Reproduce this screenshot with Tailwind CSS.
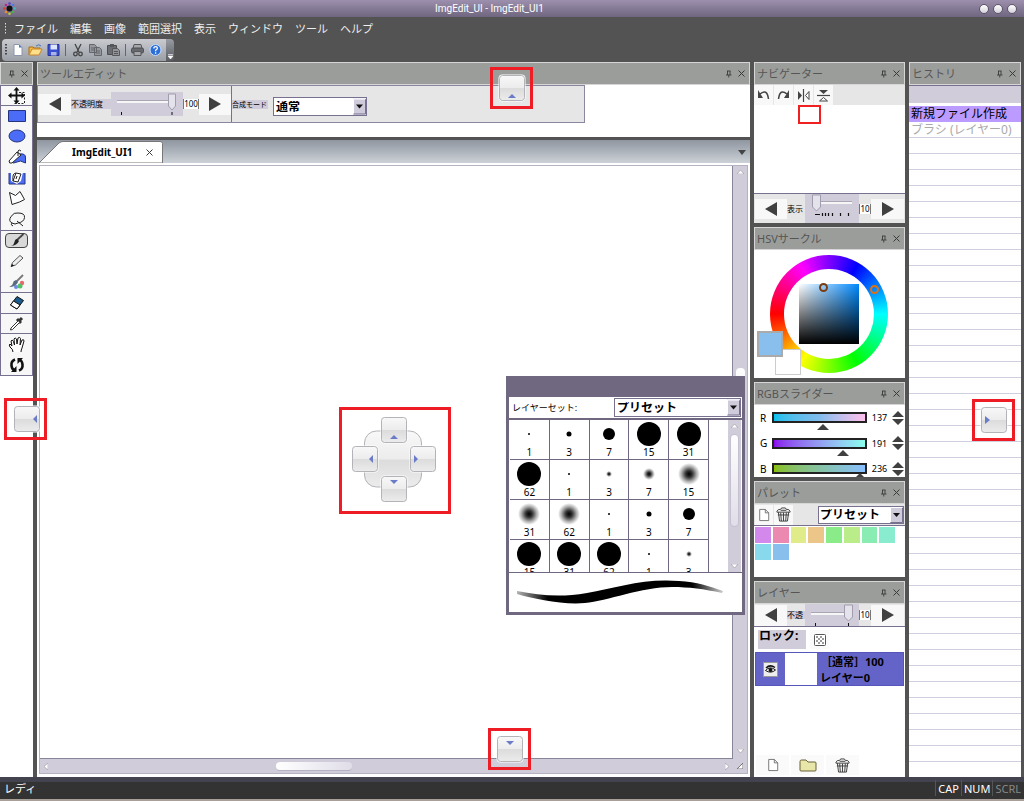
<!DOCTYPE html>
<html lang="ja">
<head>
<meta charset="utf-8">
<title>ImgEdit_UI - ImgEdit_UI1</title>
<script src="https://cdn.jsdelivr.net/npm/@tailwindcss/browser@4"></script>
</head>
<body class="relative flex h-screen flex-col overflow-hidden bg-[#535353] text-[11px] leading-none font-['Noto_Sans','Noto_Sans_CJK_JP',sans-serif] text-black select-none">

<svg class="absolute size-0" aria-hidden="true">
  <defs>
    <linearGradient id="btn" x1="0" y1="0" x2="0" y2="1"><stop offset="0" stop-color="#f8f8f8"/><stop offset=".5" stop-color="#ececec"/><stop offset=".52" stop-color="#dcdcdc"/><stop offset="1" stop-color="#ececec"/></linearGradient>
    <radialGradient id="soft"><stop offset="0" stop-color="#000"/><stop offset=".3" stop-color="#000" stop-opacity=".8"/><stop offset=".7" stop-color="#000" stop-opacity=".3"/><stop offset="1" stop-color="#000" stop-opacity="0"/></radialGradient>
    <symbol id="pin" viewBox="0 0 9 9"><path d="M3 2h3.500M3.500 2v4M6 2v4M2 6h5.500M4.750 6v2.500" fill="none" stroke="#3a3a3a" stroke-width=".9"/></symbol>
    <symbol id="x" viewBox="0 0 9 9"><path d="M1.500 1.500l6 6M7.500 1.500l-6 6" fill="none" stroke="#3a3a3a" stroke-width="1"/></symbol>
    <symbol id="left" viewBox="0 0 12 14"><path d="M12 0v14L0 7z" fill="#404040"/></symbol>
    <symbol id="right" viewBox="0 0 12 14"><path d="M0 0v14l12-7z" fill="#404040"/></symbol>
    <symbol id="page" viewBox="0 0 14 16"><path d="M2 1.500h6.500L12.500 5.500v9H2zM8.500 1.500v4h4" fill="#fff" stroke="#666"/></symbol>
    <symbol id="trash" viewBox="0 0 16 16"><path d="M1 4.500q1-2.500 4-2l1-1.500h4l1 1.500q3-.5 4 2v1H1zM2.500 5.500l1.300 9.500h8.400l1.300-9.500M5 6l.7 9M8 6v9M11 6l-.7 9M2 8.500h12M5 3.500h6" fill="#f4f4f4" stroke="#3c3c3c"/></symbol>
    <symbol id="spin" viewBox="0 0 12 14"><path d="M6 0l6 6H0zM0 8h12l-6 6z" fill="#404040"/></symbol>
    <symbol id="combo" viewBox="0 0 13 16"><path d="M0 0h13v16H0z" fill="#cfcbdb"/><path d="M.5 15.500h12V.5" fill="none" stroke="#77718f"/><path d="M.5 15V.5h12" fill="none" stroke="#fff"/><path d="M3 6h7l-3.500 4z" fill="#111"/></symbol>
    <symbol id="dock" viewBox="0 0 28 28"><rect x=".5" y=".5" width="27" height="27" rx="4" fill="#fff"/><rect x="1.500" y="1.500" width="25" height="25" rx="3" fill="url(#btn)" stroke="#b3b3b8"/></symbol>
  </defs>
</svg>

<header class="flex h-[17px] shrink-0 items-center bg-linear-to-b from-[#9c90ae] to-[#70667f] px-[3px]">
  <svg class="size-[13px]" viewBox="0 0 13 13" aria-hidden="true"><circle cx="6.500" cy="6.500" r="3" fill="#111"/><circle cx="6.500" cy="1.500" r="1.300" fill="#5348c8"/><circle cx="10" cy="3" r="1.300" fill="#4b7de0"/><circle cx="11.700" cy="6.500" r="1.300" fill="#3fb8c0"/><circle cx="10" cy="10" r="1.300" fill="#47b04a"/><circle cx="6.500" cy="11.700" r="1.300" fill="#b5cc3a"/><circle cx="3" cy="10" r="1.300" fill="#f08a28"/><circle cx="1.400" cy="6.500" r="1.300" fill="#e03a28"/><circle cx="3" cy="3" r="1.300" fill="#b02d90"/></svg>
  <h1 class="flex-1 pr-6 pl-2 text-center font-[Roboto,sans-serif] text-[10px] text-white">ImgEdit_UI - ImgEdit_UI1</h1>
  <div class="mr-1 flex gap-1">
    <button aria-label="最小化" class="size-[10px] rounded-full border border-[#5e566b] bg-linear-to-b from-white to-[#d4d0da]"></button>
    <button aria-label="最大化" class="size-[10px] rounded-full border border-[#5e566b] bg-linear-to-b from-white to-[#d4d0da]"></button>
    <button aria-label="閉じる" class="size-[10px] rounded-full border border-[#5e566b] bg-linear-to-b from-white to-[#d4d0da]"></button>
  </div>
</header>

<nav class="flex h-[22px] shrink-0 items-center gap-3 pl-1 text-[#eee]">
  <svg class="-mr-3 h-[13px] w-[3px]" viewBox="0 0 3 13" aria-hidden="true"><path d="M1.500 1v12" stroke="#ddd" stroke-dasharray="1.500 1.500"/></svg>
  <button class="ml-[7px]">ファイル</button><button>編集</button><button>画像</button><button>範囲選択</button><button>表示</button><button>ウィンドウ</button><button>ツール</button><button>ヘルプ</button>
</nav>

<div class="flex h-[23px] shrink-0 items-start pl-[2px]" role="toolbar" aria-label="標準">
  <div class="flex h-[22px] items-center gap-[3px] rounded-l bg-linear-to-b from-[#c9cbd0] to-[#9a9ea6] pr-[3px] pl-[3px]">
    <svg class="h-3 w-[2px]" viewBox="0 0 2 12" aria-hidden="true"><path d="M1 0v12" stroke="#222" stroke-width="1.500" stroke-dasharray="1.500 1.500"/></svg>
    <button aria-label="新規" class="h-[14px] w-[15px]"><svg class="h-[14px] w-[15px]" viewBox="0 0 15 14"><path d="M4 1.500h5l3 3v8H4z" fill="#fff" stroke="#8c96a8"/><path d="M9 1.500v3h3z" fill="#4a76b8"/></svg></button>
    <button aria-label="開く" class="h-[14px] w-[15px]"><svg class="h-[14px] w-[15px]" viewBox="0 0 15 14"><path d="M1 12V4h4l1 1h6v2" fill="#f5b93c" stroke="#a8711c"/><path d="M1 12l3-6h10l-3 6z" fill="#ffe08a" stroke="#c8882a"/><path d="M8 3q3-2.500 5 0" fill="none" stroke="#4a76b8"/></svg></button>
    <button aria-label="保存" class="h-[14px] w-[15px]"><svg class="h-[14px] w-[15px]" viewBox="0 0 15 14"><path d="M2 1.500h11v11H2z" fill="#3a4fd0" stroke="#26339a"/><path d="M4.500 1.500h6.500v5H4.500z" fill="#dde6ff"/><path d="M5 9h5.500v3.500H5z" fill="#aab4e8"/></svg></button>
    <span class="mx-[1px] h-3 w-px bg-[#666]"></span>
    <button aria-label="切り取り" class="h-[14px] w-[15px]"><svg class="h-[14px] w-[15px]" viewBox="0 0 15 14"><path d="M5 1l4 8M11 1L7 9" stroke="#444" stroke-width="1.300"/><circle cx="5.500" cy="11" r="1.800" fill="none" stroke="#444" stroke-width="1.300"/><circle cx="10.500" cy="11" r="1.800" fill="none" stroke="#444" stroke-width="1.300"/></svg></button>
    <button aria-label="コピー" class="h-[14px] w-[15px]"><svg class="h-[14px] w-[15px]" viewBox="0 0 15 14"><path d="M1.500 1.500h5l2 2v6h-7zM6.500 4.500h5l2 2v6h-7z" fill="#96989d" stroke="#63666c"/><path d="M8 8h4M8 10h4M3 5h3M3 7h3" stroke="#63666c"/></svg></button>
    <button aria-label="貼り付け" class="h-[14px] w-[15px]"><svg class="h-[14px] w-[15px]" viewBox="0 0 15 14"><path d="M1.500 2.500h9v9h-9z" fill="#6b6d72" stroke="#4c4e52"/><path d="M4 1h4v3H4z" fill="#55575b"/><path d="M6.500 5.500h5l2 2v5h-7z" fill="#919398" stroke="#55575b"/><path d="M8 8.500h4M8 10.500h4" stroke="#55575b"/></svg></button>
    <span class="mx-[1px] h-3 w-px bg-[#666]"></span>
    <button aria-label="印刷" class="h-[14px] w-[15px]"><svg class="h-[14px] w-[15px]" viewBox="0 0 15 14"><path d="M4 1.500h7l1 4H3z" fill="#a5a7ab" stroke="#55575b"/><rect x="1.500" y="5" width="12" height="5" rx="1.500" fill="#66696e" stroke="#4a4c50"/><path d="M4 8.500h7v4H4z" fill="#a5a7ab" stroke="#55575b"/></svg></button>
    <button aria-label="ヘルプ" class="h-[14px] w-[15px]"><svg class="h-[14px] w-[15px]" viewBox="0 0 15 14"><circle cx="7.500" cy="7" r="5.500" fill="#2c6fd6" stroke="#c8dcff"/><path d="M5.800 5.500q0-1.800 1.800-1.800t1.800 1.600q0 1-1.800 2v1M7.600 9.300v1.400" fill="none" stroke="#fff" stroke-width="1.300"/></svg></button>
  </div>
  <button aria-label="ツールバーのオプション" class="flex h-[22px] w-2 items-end justify-center rounded-r bg-linear-to-b from-[#999ca3] to-[#5a5c62] pb-[2px]"><svg class="size-[5px]" viewBox="0 0 5 5"><path d="M0 .5h5M0 2h5L2.500 5z" stroke="#fff" stroke-width=".6" fill="#fff"/></svg></button>
</div>

<main class="flex min-h-0 flex-1 gap-1 pr-[3px]">

  <!-- Toolbox -->
  <aside class="flex w-[33px] shrink-0 flex-col bg-white" aria-label="ツール">
    <header class="flex h-[23px] shrink-0 items-center justify-end gap-1 border border-[#d6d6d6] bg-[#9b9d9b] pr-[3px]"><button aria-label="固定"><svg class="size-[9px]"><use href="#pin"/></svg></button><button aria-label="閉じる"><svg class="size-[9px]"><use href="#x"/></svg></button></header>
    <div class="grid h-[291px] shrink-0 auto-rows-fr grid-rows-[19px] border border-[#77718f] bg-[#f7f7f7]">
      <button aria-label="移動" class="flex items-center justify-center overflow-hidden"><svg class="size-[19px] shrink-0" viewBox="0 0 19 19"><path d="M9.500 3v13M3 9.500h13" stroke="#111" stroke-width="1.800"/><path d="M9.500 1l3 3.500h-6zM9.500 18l3-3.500h-6zM1 9.500l3.500-3v6zM18 9.500l-3.500-3v6z" fill="#111"/><path d="M12 6.500h5.500v11H7" fill="none" stroke="#222" stroke-dasharray="2 1.500"/></svg></button>
      <button aria-label="矩形" class="flex items-center justify-center border-t border-[#77718f]"><svg class="h-[12px] w-[18px]" viewBox="0 0 18 12"><path d="M.5.5h17v11H.5z" fill="#4a6cf7" stroke="#27347d"/></svg></button>
      <button aria-label="楕円" class="flex items-center justify-center"><svg class="h-[14px] w-[18px]" viewBox="0 0 18 14"><ellipse cx="9" cy="7" rx="8" ry="6" fill="#4a6cf7" stroke="#27347d"/></svg></button>
      <button aria-label="塗りつぶし" class="flex items-center justify-center"><svg class="h-[16px] w-[18px]" viewBox="0 0 18 16"><path d="M11 5q7-1 6.500 4v5l-5-2-7 2-3-2z" fill="#4a6cf7" stroke="#27347d"/><path d="M1 12l8-9 4 3-9 8q-3 1-3-2z" fill="#fff" stroke="#222"/><path d="M10 7V2q1-2 3 0" fill="none" stroke="#222"/></svg></button>
      <button aria-label="領域塗りつぶし" class="flex items-center justify-center"><svg class="h-[14px] w-[18px]" viewBox="0 0 18 14"><path d="M1 2v11h16V2" fill="#4a6cf7" stroke="#27347d"/><path d="M3 10V2l5-1h7l-2 9-4 3z" fill="#fff"/><path d="M5 10l3-8 5 1-3 8zM8 2q-4 0-3 8M9 5l-1 3" fill="#fff" stroke="#222"/></svg></button>
      <button aria-label="多角形選択" class="flex items-center justify-center"><svg class="h-[16px] w-[18px]" viewBox="0 0 18 16"><path d="M4 14.500L1.500 2.500l6 3L12 1.500l4.500 8-5 2.500z" fill="#fff" stroke="#222"/></svg></button>
      <button aria-label="投げ縄" class="flex items-center justify-center"><svg class="h-[15px] w-[18px]" viewBox="0 0 18 15"><path d="M4 11Q0 9 3 4.500T10 1q7 0 6.500 4.500T10 11q-3 2-6 0zM9 9l6 5M4 11q-2 2 1 3" fill="none" stroke="#222"/></svg></button>
      <button aria-label="ブラシ" aria-pressed="true" class="relative flex items-center justify-center border-t border-[#77718f] before:absolute before:inset-x-1 before:inset-y-[2px] before:rounded-sm before:border before:border-[#444] before:bg-[#d8d8d8]"><svg class="relative h-[14px] w-[16px]" viewBox="0 0 16 14"><path d="M14.500 1L8 7" stroke="#444" stroke-width="1.800"/><path d="M8 6l2 2q-2 4.500-8 5 3-1 3.500-4T8 6z" fill="#222"/></svg></button>
      <button aria-label="鉛筆" class="flex items-center justify-center"><svg class="h-[14px] w-[16px]" viewBox="0 0 16 14"><path d="M2 12.500l1.500-4L11 1.500l3 2.500-7.500 7z" fill="#eee" stroke="#555"/><path d="M2 13l3-1.500-2-1.500z" fill="#111"/></svg></button>
      <button aria-label="水彩" class="flex items-center justify-center"><svg class="h-[15px] w-[17px]" viewBox="0 0 17 15"><circle cx="14" cy="9" r="2.200" fill="#e86a6a"/><circle cx="12" cy="12" r="2.500" fill="#54c06a"/><circle cx="8" cy="13" r="2" fill="#6a88e8"/><path d="M15 1L8 8" stroke="#777" stroke-width="1.800"/><path d="M8 6l2 2q-2 5-9 5 4-2 4-4t3-3z" fill="#5a6a80"/></svg></button>
      <button aria-label="消しゴム" class="flex items-center justify-center border-t border-[#77718f]"><svg class="h-[15px] w-[16px]" viewBox="0 0 16 15"><path d="M8 1.500l6.500 4L8 14l-6.500-4z" fill="#1d5a8c" stroke="#111"/><path d="M4.500 6l6.500 4-3 4-6.500-4z" fill="#fff" stroke="#111"/></svg></button>
      <button aria-label="スポイト" class="flex items-center justify-center border-t border-[#77718f]"><svg class="h-[15px] w-[15px]" viewBox="0 0 15 15"><path d="M8 3l4 4M9.500 5.500L13 2" stroke="#333" stroke-width="3"/><path d="M9 5L2 12l-.5 2 2-.500L10.500 6.500" fill="#fff" stroke="#333"/></svg></button>
      <button aria-label="手のひら" class="flex items-center justify-center border-t border-[#77718f]"><svg class="h-[17px] w-[18px]" viewBox="0 0 18 17"><path d="M5 16q0-3-3-5-1.500-2.500 0-3l2 2-1-5q1-2 2.500.5L6.500 9 6 3q1-2 2.500 0L9 8l1-6q2-1.500 2.500.5L12 9l2-5q2-1 2 1l-2 7q-1 2-1 4" fill="#fff" stroke="#111"/></svg></button>
      <button aria-label="回転" class="flex items-center justify-center"><svg class="h-[14px] w-[16px]" viewBox="0 0 16 14"><path d="M6 1.500Q2 3 2.500 7.500T6 12M10 12.500q4-1.500 3.500-6T10 2" fill="none" stroke="#111" stroke-width="2.600"/><path d="M7.500 8v6H2zM8.500 6V0H14z" fill="#111"/></svg></button>
    </div>
  </aside>

  <!-- Centre: tool options and document -->
  <div class="flex min-w-0 flex-1 flex-col gap-[3px]">
    <section class="flex h-[75px] shrink-0 flex-col bg-white">
      <header class="flex h-[23px] items-center gap-1 border border-[#d6d6d6] bg-[#9b9d9b] pr-[3px] pl-[2px]"><h2 class="flex-1 text-[#555]">ツールエディット</h2><button aria-label="固定"><svg class="size-[9px]"><use href="#pin"/></svg></button><button aria-label="閉じる"><svg class="size-[9px]"><use href="#x"/></svg></button></header>
      <form class="flex h-[38px] w-[548px] items-center border border-[#8a86a0] bg-[#e6e6e6]">
        <button type="button" aria-label="減らす" class="flex h-[21px] w-[33px] items-center justify-center bg-[#f8f8f8]"><svg class="h-[14px] w-3"><use href="#left"/></svg></button>
        <label for="opacity" class="w-10 bg-[#d0ccda] py-[1px] text-[8px]">不透明度</label>
        <div class="relative h-6 w-[72px] bg-[#d0ccda]"><svg class="h-6 w-[72px]" viewBox="0 0 72 24" aria-hidden="true"><path d="M6 8.500h58" stroke="#aaa6b5"/><path d="M6 10h58" stroke="#f6f6f6" stroke-width="2"/><path d="M57.500 2h7v12l-3.500 4-3.500-4z" fill="#e4e2ea" stroke="#a19daf"/><path d="M10.500 20v3M61 20v3" stroke="#111"/></svg><input id="opacity" type="range" value="100" class="absolute inset-0 w-full opacity-0"></div>
        <output for="opacity" class="flex h-[10px] w-4 items-center justify-center border-x border-[#777] bg-white text-[8px]">100</output>
        <button type="button" aria-label="増やす" class="flex h-[21px] w-8 items-center justify-center bg-[#f8f8f8]"><svg class="h-[14px] w-3"><use href="#right"/></svg></button>
        <span class="h-full w-px bg-[#77718f]"></span>
        <label for="blend" class="mr-[5px] w-9 bg-[#d0ccda] py-[1px] text-[7px] whitespace-nowrap">合成モード</label>
        <div class="relative mt-[5px] flex h-[19px] w-[94px] border border-[#77718f] bg-white">
          <select id="blend" class="w-full appearance-none bg-transparent pl-[2px] text-xs leading-none font-bold"><option>通常</option></select>
          <svg class="pointer-events-none absolute inset-y-0 right-0 h-full w-[13px]"><use href="#combo"/></svg>
        </div>
      </form>
    </section>

    <section class="flex min-h-0 flex-1 flex-col bg-white">
      <div class="flex h-[23px] shrink-0 items-end justify-between bg-linear-to-b from-[#8f96a0] to-[#cdd2d8] pr-1">
        <div class="relative flex h-[22px] w-[126px] items-center gap-3 pl-[35px]">
          <svg class="absolute inset-0 size-full" viewBox="0 0 126 22" aria-hidden="true"><path d="M2 22L22 2q2-1.500 4-1.500h97q2.500 0 2.500 2V22z" fill="#fff" stroke="#777"/></svg>
          <span class="relative text-[10px] font-bold">ImgEdit_UI1</span>
          <button aria-label="タブを閉じる" class="relative"><svg class="size-[9px]"><use href="#x"/></svg></button>
        </div>
        <button aria-label="ドキュメント一覧" class="mb-2"><svg class="h-[5px] w-2" viewBox="0 0 8 5"><path d="M0 0h8L4 5z" fill="#444"/></svg></button>
      </div>
      <div class="flex min-h-0 flex-1 flex-col border-x-2 border-t-2 border-b-[3px] border-white">
        <div class="flex min-h-0 flex-1 border border-[#b5b2c2]">
          <div class="flex min-w-0 flex-1 flex-col">
            <div class="flex-1 border-r border-b border-[#888499] bg-white"></div>
            <div class="flex h-[14px] items-center bg-[#d0ccda] px-1">
              <svg class="h-[7px] w-1" viewBox="0 0 4 7"><path d="M4 0v7L0 3.500z" fill="#fff" stroke="#888" stroke-width=".5"/></svg>
              <div class="flex flex-1"><div class="grow-[228]"></div><div class="h-[9px] w-[76px] rounded-sm border-b border-[#b5b2c2] bg-linear-to-r from-white to-[#e0dde8]"></div><div class="grow-[372]"></div></div>
              <svg class="h-[7px] w-1" viewBox="0 0 4 7"><path d="M0 0v7l4-3.500z" fill="#fff" stroke="#888" stroke-width=".5"/></svg>
            </div>
          </div>
          <div class="flex w-[14px] flex-col items-center bg-[#d0ccda] py-1">
            <svg class="h-1 w-[7px]" viewBox="0 0 7 4"><path d="M0 4h7L3.500 0z" fill="#fff" stroke="#888" stroke-width=".5"/></svg>
            <div class="flex flex-1 flex-col"><div class="grow-[194]"></div><div class="h-[76px] w-[9px] rounded-sm bg-linear-to-b from-white to-[#e0dde8]"></div><div class="grow-[304]"></div></div>
            <svg class="h-1 w-[7px]" viewBox="0 0 7 4"><path d="M0 0h7L3.500 4z" fill="#fff" stroke="#888" stroke-width=".5"/></svg>
            <svg class="mt-[10px] size-[6px]" viewBox="0 0 6 6"><path d="M6 0v6H0z" fill="#fff" stroke="#777"/></svg>
          </div>
        </div>
      </div>
    </section>
  </div>

  <!-- Right docked panels -->
  <div class="flex w-[151px] shrink-0 flex-col gap-1">
    <section class="flex h-[161px] shrink-0 flex-col bg-white">
      <header class="flex h-[23px] shrink-0 items-center gap-1 border border-[#d6d6d6] bg-[#9b9d9b] pr-[3px] pl-[2px]"><h2 class="flex-1 text-[#555]">ナビゲーター</h2><button aria-label="固定"><svg class="size-[9px]"><use href="#pin"/></svg></button><button aria-label="閉じる"><svg class="size-[9px]"><use href="#x"/></svg></button></header>
      <div class="flex h-5 shrink-0 gap-px bg-[#e6e6e6]">
        <button aria-label="左回転" class="flex w-[19px] items-center justify-center bg-[#f8f8f8]"><svg class="h-3 w-[13px]" viewBox="0 0 13 12"><path d="M3 5q7-6 8.500 5" fill="none" stroke="#444" stroke-width="1.500"/><path d="M1 1v8h5z" fill="#444"/></svg></button>
        <button aria-label="右回転" class="flex w-[19px] items-center justify-center bg-[#f8f8f8]"><svg class="h-3 w-[13px]" viewBox="0 0 13 12"><path d="M10 5Q3-1 1.500 10" fill="none" stroke="#444" stroke-width="1.500"/><path d="M12 1v8H7z" fill="#444"/></svg></button>
        <button aria-label="左右反転" class="flex w-[19px] items-center justify-center bg-[#f8f8f8]"><svg class="h-[13px] w-[13px]" viewBox="0 0 13 13"><path d="M6.500 0v13" stroke="#444" stroke-width="1.200"/><path d="M1 2v9l4-4.500z" fill="#444"/><path d="M12 2.500v8L8.500 6.500z" fill="#fff" stroke="#444"/></svg></button>
        <button aria-label="上下反転" class="flex w-[19px] items-center justify-center bg-[#f8f8f8]"><svg class="h-[13px] w-[13px]" viewBox="0 0 13 13"><path d="M0 6.500h13" stroke="#444" stroke-width="1.200"/><path d="M2 1h9L6.500 5z" fill="#444"/><path d="M2.500 12h8l-4-3.500z" fill="#fff" stroke="#444"/></svg></button>
      </div>
      <div class="flex flex-1 justify-center"><div class="mr-10 h-[19px] w-[23px] border-2 border-[#f02020]"></div></div>
      <div class="flex h-[30px] shrink-0 items-center border-t border-[#77718f] bg-[#e6e6e6]">
        <button aria-label="縮小" class="ml-[1px] flex h-5 w-8 items-center justify-center bg-[#f8f8f8]"><svg class="h-[14px] w-3"><use href="#left"/></svg></button>
        <label for="zoom" class="w-[18px] text-[8px]">表示</label>
        <div class="relative h-full w-[54px] bg-[#d0ccda]"><svg class="h-[29px] w-[54px]" viewBox="0 0 54 29" aria-hidden="true"><path d="M8 7.500h39" stroke="#aaa6b5"/><path d="M8 9h39" stroke="#f6f6f6" stroke-width="2"/><path d="M7.500 1h8v12l-4 4-4-4z" fill="#e4e2ea" stroke="#a19daf"/><path d="M10 20.500h5M17.500 19v3M20.500 19v3M23.500 19v3M27.500 19v3M35.500 19v3M43.500 19v3" stroke="#111" stroke-width="1.200"/></svg><input id="zoom" type="range" value="10" class="absolute inset-0 w-full opacity-0"></div>
        <output for="zoom" class="flex h-[10px] w-3 items-center justify-center border-x border-[#777] bg-white text-[8px]">10</output>
        <button aria-label="拡大" class="flex h-5 w-[33px] items-center justify-center bg-[#f8f8f8]"><svg class="h-[14px] w-3"><use href="#right"/></svg></button>
      </div>
    </section>

    <section class="flex h-[151px] shrink-0 flex-col bg-white">
      <header class="flex h-[23px] shrink-0 items-center gap-1 border border-[#d6d6d6] bg-[#9b9d9b] pr-[3px] pl-[2px]"><h2 class="flex-1 text-[#555]">HSVサークル</h2><button aria-label="固定"><svg class="size-[9px]"><use href="#pin"/></svg></button><button aria-label="閉じる"><svg class="size-[9px]"><use href="#x"/></svg></button></header>
      <div class="relative flex flex-1 items-center justify-center pr-px">
        <div class="flex size-[118px] items-center justify-center rounded-full bg-[conic-gradient(#8000ff,#0000ff_30deg,#0080ff_60deg,#00ffff_90deg,#00ff80_120deg,#00ff00_150deg,#80ff00_180deg,#ffff00_210deg,#ff8000_240deg,#ff0000_270deg,#ff0080_300deg,#ff00ff_330deg,#8000ff_360deg)]">
          <div class="flex size-[90px] items-center justify-center rounded-full bg-white"><div class="size-[60px] bg-[linear-gradient(to_top,#000,transparent),linear-gradient(to_right,#fff,#008aff)]"></div></div>
        </div>
        <span class="absolute top-[33px] left-[65px] size-[9px] rounded-full border-2 border-[#7a3c10]"></span>
        <span class="absolute top-[35px] left-[116px] size-[9px] rounded-full border-2 border-[#e07010]"></span>
        <button aria-label="背景色" class="absolute bottom-[3px] left-[21px] size-[26px] border border-[#ccc] bg-white"></button>
        <button aria-label="描画色" class="absolute bottom-[21px] left-[3px] size-[26px] border-2 border-[#aaa] bg-[#89bfec]"></button>
      </div>
    </section>

    <section class="flex h-[95px] shrink-0 flex-col overflow-hidden bg-white">
      <header class="flex h-[23px] shrink-0 items-center gap-1 border border-[#d6d6d6] bg-[#9b9d9b] pr-[3px] pl-[2px]"><h2 class="flex-1 text-[#555]">RGBスライダー</h2><button aria-label="固定"><svg class="size-[9px]"><use href="#pin"/></svg></button><button aria-label="閉じる"><svg class="size-[9px]"><use href="#x"/></svg></button></header>
      <div class="flex flex-col pl-[6px] text-[10px]">
        <div class="flex h-[25px] items-center"><label for="r" class="w-3">R</label><div class="relative h-[11px] w-[95px] border-2 border-[#222] bg-linear-to-r from-[#00bfec] via-[#80bcec] to-[#ffbfec]"><svg class="absolute top-[10px] left-[43px] h-[6px] w-3" viewBox="0 0 12 6"><path d="M6 0l6 6H0z" fill="#404040"/></svg><input id="r" type="range" max="255" value="137" class="absolute inset-0 w-full opacity-0"></div><output for="r" class="w-[25px] text-center text-[9px]">137</output><svg class="h-[14px] w-3"><use href="#spin"/></svg></div>
        <div class="flex h-[26px] items-center"><label for="g" class="w-3">G</label><div class="relative h-[11px] w-[95px] border-2 border-[#222] bg-linear-to-r from-[#8900ec] to-[#89ffec]"><svg class="absolute top-[10px] left-[63px] h-[6px] w-3" viewBox="0 0 12 6"><path d="M6 0l6 6H0z" fill="#404040"/></svg><input id="g" type="range" max="255" value="191" class="absolute inset-0 w-full opacity-0"></div><output for="g" class="w-[25px] text-center text-[9px]">191</output><svg class="h-[14px] w-3"><use href="#spin"/></svg></div>
        <div class="flex h-[25px] items-center"><label for="b" class="w-3">B</label><div class="relative h-[11px] w-[95px] border-2 border-[#222] bg-linear-to-r from-[#89bf00] to-[#89bfff]"><svg class="absolute top-[8px] left-[80px] h-[6px] w-3" viewBox="0 0 12 6"><path d="M6 0l6 6H0z" fill="#404040"/></svg><input id="b" type="range" max="255" value="236" class="absolute inset-0 w-full opacity-0"></div><output for="b" class="w-[25px] text-center text-[9px]">236</output><svg class="h-[14px] w-3"><use href="#spin"/></svg></div>
      </div>
    </section>

    <section class="flex h-24 shrink-0 flex-col bg-white">
      <header class="flex h-[23px] shrink-0 items-center gap-1 border border-[#d6d6d6] bg-[#9b9d9b] pr-[3px] pl-[2px]"><h2 class="flex-1 text-[#555]">パレット</h2><button aria-label="固定"><svg class="size-[9px]"><use href="#pin"/></svg></button><button aria-label="閉じる"><svg class="size-[9px]"><use href="#x"/></svg></button></header>
      <div class="flex h-[22px] shrink-0 items-center gap-px border-b border-[#77718f] bg-[#e6e6e6] pr-px pl-px">
        <button aria-label="新規パレット" class="flex h-5 w-[18px] items-center justify-center bg-[#f8f8f8]"><svg class="h-[14px] w-3"><use href="#page"/></svg></button>
        <button aria-label="削除" class="flex h-5 w-[19px] items-center justify-center bg-[#f8f8f8]"><svg class="size-[15px]"><use href="#trash"/></svg></button>
        <div class="relative ml-auto flex h-[18px] w-[86px] border border-[#77718f] bg-white">
          <select aria-label="パレット" class="w-full appearance-none bg-transparent pl-[1px] text-xs leading-none font-bold"><option>プリセット</option></select>
          <svg class="pointer-events-none absolute inset-y-0 right-0 h-full w-[13px]"><use href="#combo"/></svg>
        </div>
      </div>
      <div class="grid grid-cols-8 gap-x-[2px] gap-y-px p-px pr-[10px]">
        <button aria-label="色1" class="h-4 bg-[#d389ec]"></button><button aria-label="色2" class="h-4 bg-[#ec89b0]"></button><button aria-label="色3" class="h-4 bg-[#dfec89]"></button><button aria-label="色4" class="h-4 bg-[#ecc589]"></button><button aria-label="色5" class="h-4 bg-[#89ec89]"></button><button aria-label="色6" class="h-4 bg-[#baec89]"></button><button aria-label="色7" class="h-4 bg-[#89ecb3]"></button><button aria-label="色8" class="h-4 bg-[#89eccf]"></button><button aria-label="色9" class="h-4 bg-[#89d9ec]"></button><button aria-label="色10" class="h-4 bg-[#89bfec]"></button>
      </div>
    </section>

    <section class="flex min-h-0 flex-1 flex-col bg-white">
      <header class="flex h-[23px] shrink-0 items-center gap-1 border border-[#d6d6d6] bg-[#9b9d9b] pr-[3px] pl-[2px]"><h2 class="flex-1 text-[#555]">レイヤー</h2><button aria-label="固定"><svg class="size-[9px]"><use href="#pin"/></svg></button><button aria-label="閉じる"><svg class="size-[9px]"><use href="#x"/></svg></button></header>
      <div class="flex h-[23px] shrink-0 items-center border-b border-[#77718f] bg-[#e6e6e6]">
        <button aria-label="減らす" class="ml-[1px] flex h-[21px] w-8 items-center justify-center bg-[#f8f8f8]"><svg class="h-[14px] w-3"><use href="#left"/></svg></button>
        <label for="layerop" class="w-[18px] bg-[#d0ccda] text-[8px]">不透</label>
        <div class="relative h-full w-[54px] bg-[#d0ccda]"><svg class="h-[22px] w-[54px]" viewBox="0 0 54 22" aria-hidden="true"><path d="M6 8.500h42" stroke="#aaa6b5"/><path d="M6 10h42" stroke="#f6f6f6" stroke-width="2"/><path d="M39.500 1h8v12l-4 4-4-4z" fill="#e4e2ea" stroke="#a19daf"/><path d="M10.500 19v3M43.500 19v3" stroke="#111"/></svg><input id="layerop" type="range" value="100" class="absolute inset-0 w-full opacity-0"></div>
        <output for="layerop" class="flex h-[10px] w-3 items-center justify-center border-x border-[#777] bg-white text-[8px]">10</output>
        <button aria-label="増やす" class="flex h-[21px] w-[33px] items-center justify-center bg-[#f8f8f8]"><svg class="h-[14px] w-3"><use href="#right"/></svg></button>
      </div>
      <div class="flex h-[25px] shrink-0 items-center gap-1 pl-1">
        <span class="h-[19px] w-12 bg-[#d0ccda] pl-[1px] text-xs leading-none font-bold whitespace-nowrap">ロック:</span>
        <button aria-label="透明部分をロック" class="flex size-[19px] items-center justify-center bg-[#fafafa]"><svg class="size-3" viewBox="0 0 12 12"><rect x=".5" y=".5" width="11" height="11" rx="1" fill="#fff" stroke="#555"/><path d="M2 3h2M6 3h2M4 5h2M8 5h2M2 7h2M6 7h2M4 9h2M8 9h2" stroke="#999" stroke-width="2"/></svg></button>
      </div>
      <div class="ml-px mr-px flex h-[34px] shrink-0 items-stretch border border-[#5555bb] bg-[#6464c8]">
        <button aria-label="表示切替" class="m-auto flex size-[15px] items-center justify-center border border-[#999] bg-[#eee]"><svg class="h-[9px] w-[11px]" viewBox="0 0 11 9"><path d="M.5 5.500Q5 .5 10.500 5 6 9 .5 5.500z" fill="#fff" stroke="#111"/><circle cx="5.500" cy="5" r="2" fill="#111"/><path d="M1 3q4-4 9-.5" fill="none" stroke="#111" stroke-width="1.500"/></svg></button>
        <div class="w-8 bg-white"></div>
        <div class="flex w-[86px] flex-col justify-around pl-[3px] text-[11px] font-bold whitespace-nowrap"><span class="pl-[1px]">［通常］100</span><span>レイヤー0</span></div>
      </div>
      <div class="mt-auto flex shrink-0 gap-[2px] px-[2px] pb-[2px]">
        <button aria-label="新規レイヤー" class="flex h-5 w-[33px] items-center justify-center bg-[#fafafa]"><svg class="h-[14px] w-3"><use href="#page"/></svg></button>
        <button aria-label="新規フォルダ" class="flex h-5 w-[33px] items-center justify-center bg-[#fafafa]"><svg class="h-[13px] w-[18px]" viewBox="0 0 18 13"><path d="M1 11V2.500Q1 1 2.500 1H7l2 2h7q1 0 1 1v7q0 1-1 1H2q-1 0-1-1z" fill="#e8e6a8" stroke="#6b6036"/></svg></button>
        <button aria-label="削除" class="flex h-5 w-[33px] items-center justify-center bg-[#fafafa]"><svg class="size-[15px]"><use href="#trash"/></svg></button>
      </div>
    </section>
  </div>

  <!-- History -->
  <aside class="flex w-28 shrink-0 flex-col bg-white">
    <header class="flex h-[23px] shrink-0 items-center gap-1 border border-[#d6d6d6] bg-[#9b9d9b] pr-[3px] pl-[2px]"><h2 class="flex-1 text-[#555]">ヒストリ</h2><button aria-label="固定"><svg class="size-[9px]"><use href="#pin"/></svg></button><button aria-label="閉じる"><svg class="size-[9px]"><use href="#x"/></svg></button></header>
    <div class="h-[18px] shrink-0 border-t border-[#77718f] bg-[#d0ccda]"></div>
    <ol class="mt-[3px] mb-[15px] flex-1 overflow-hidden bg-[repeating-linear-gradient(to_bottom,#fff_0_15px,#d0cfe0_15px_16px)] text-xs whitespace-nowrap">
      <li class="flex h-4 items-center bg-[#bb9bff] pl-[2px]">新規ファイル作成</li>
      <li class="flex h-4 items-center pl-[2px] text-[#aaa]">ブラシ (レイヤー0)</li>
    </ol>
  </aside>
</main>

<footer class="flex h-6 shrink-0 items-center border-b-2 border-[#a89f98] bg-linear-to-b from-[#43434f] from-25% to-[#333] to-25% pr-[3px] pl-1 text-white">
  <span class="flex-1 text-[11px]">レディ</span>
  <span class="flex h-4 items-center border-l border-[#555] px-[2px] text-[11px]">CAP</span>
  <span class="flex h-4 items-center border-l border-[#555] px-[2px] text-[11px]">NUM</span>
  <span class="flex h-4 items-center border-l border-[#555] pl-[2px] text-[11px] text-[#888]">SCRL</span>
</footer>

<!-- Docking guides -->
<div class="absolute top-[398px] left-1 flex h-[42px] w-[43px] items-center justify-end border-[3px] border-[#ee1c25] pr-[3px]"><svg class="size-7" viewBox="0 0 28 28"><use href="#dock"/><path d="M24 10v8l-4-4z" fill="#6a7cc8"/></svg></div>
<div class="absolute top-[67px] left-[490px] flex h-[42px] w-[43px] items-center justify-center border-[3px] border-[#ee1c25]"><svg class="size-7" viewBox="0 0 28 28"><use href="#dock"/><path d="M10 24h8l-4-4z" fill="#6a7cc8"/></svg></div>
<div class="absolute bottom-[31px] left-[488px] flex h-[42px] w-[43px] items-center justify-center border-[3px] border-[#ee1c25]"><svg class="size-7" viewBox="0 0 28 28"><use href="#dock"/><path d="M10 6h8l-4 4z" fill="#6a7cc8"/></svg></div>
<div class="absolute top-[399px] right-[9px] flex h-[42px] w-[43px] items-center justify-center border-[3px] border-[#ee1c25]"><svg class="size-7" viewBox="0 0 28 28"><use href="#dock"/><path d="M5 10v8l5-4z" fill="#6a7cc8"/></svg></div>
<div class="absolute top-[407px] left-[339px] flex h-[107px] w-[112px] items-center justify-center border-[3px] border-[#ee1c25] pr-[4px] pb-[4px]">
  <svg class="h-[88px] w-[87px]" viewBox="0 0 87 88">
    <rect x="14.500" y="16" width="57" height="56" rx="12" fill="url(#btn)" stroke="#b3b3b8"/>
    <use href="#dock" x="30" y="1" width="28" height="28"/><use href="#dock" x="1" y="30" width="28" height="28"/><use href="#dock" x="59" y="30" width="28" height="28"/><use href="#dock" x="30" y="60" width="28" height="28"/>
    <path d="M40 24h8l-4-4zM40 65h8l-4 4zM23 40v8l-4-4zM64 40v8l4-4z" fill="#6a7cc8"/>
  </svg>
</div>

<!-- Brush preset window -->
<section class="absolute top-[376px] left-[506px] flex h-[239px] w-[239px] flex-col border-[3px] border-[#706880] bg-white" aria-label="ブラシ">
  <div class="h-[18px] shrink-0 bg-[#706880]"></div>
  <div class="flex h-[23px] shrink-0 items-center justify-between border-b-2 border-[#706880] pr-px pl-[3px]">
    <label for="brushset" class="text-[9px]">レイヤーセット:</label>
    <div class="relative flex h-[19px] w-[127px] border border-[#77718f] bg-white"><select id="brushset" class="w-full appearance-none bg-transparent pl-[2px] text-xs leading-none font-bold"><option>プリセット</option></select><svg class="pointer-events-none absolute inset-y-0 right-0 h-full w-[13px]"><use href="#combo"/></svg></div>
  </div>
  <div class="flex h-[152px] shrink-0 justify-between overflow-hidden pr-px pl-px">
    <div id="brushes" class="grid w-[199px] auto-rows-[40px] grid-cols-5"></div>
    <div class="flex w-[13px] flex-col items-center bg-[#d0ccda] py-1"><svg class="h-1 w-[7px]" viewBox="0 0 7 4"><path d="M0 4h7L3.500 0z" fill="#fff" stroke="#888" stroke-width=".5"/></svg><div class="mt-[6px] h-[93px] w-[9px] rounded-sm border border-[#c5c1d0] bg-linear-to-b from-white to-[#e0dde8]"></div><svg class="mt-auto h-1 w-[7px]" viewBox="0 0 7 4"><path d="M0 0h7L3.500 4z" fill="#fff" stroke="#888" stroke-width=".5"/></svg></div>
  </div>
  <div class="flex-1 border-t border-[#706880]"><svg class="h-[38px] w-full" viewBox="0 0 233 38"><defs><linearGradient id="stroke"><stop offset="0" stop-color="#000" stop-opacity=".3"/><stop offset=".15" stop-color="#000"/><stop offset=".85" stop-color="#000"/><stop offset="1" stop-color="#000" stop-opacity=".2"/></linearGradient></defs><path d="M8 18C30 22 50 25 78 20S135 5 170 8c18 1 30 5 44 10l-1 2c-18-4-33-6-50-6-30 0-65 14-87 16S25 26 8 21z" fill="url(#stroke)"/></svg></div>
</section>

<script>
  // [radius, label, soft edge]
  const brushes = [[1,'1'],[2.5,'3'],[6,'7'],[12,'15'],[12,'31'],[12,'62'],[1,'1'],[3,'3',1],[6,'7',1],[11,'15',1],[11,'31',1],[11,'62',1],[1,'1'],[2.5,'3'],[6,'7'],[12,'15'],[12,'31'],[12,'62'],[1,'1'],[3,'3',1]];
  document.getElementById('brushes').innerHTML = brushes.map(([r, n, soft]) =>
    `<button class="flex flex-col items-center border-r border-b border-[#706880] pt-[2px] text-[10px] leading-none"><svg class="h-6 w-6 shrink-0" viewBox="0 0 24 24"><circle cx="12" cy="12" r="${r}" fill="${soft ? 'url(#soft)' : '#000'}"/></svg><span class="pt-px">${n}</span></button>`).join('');
</script>
</body>
</html>
